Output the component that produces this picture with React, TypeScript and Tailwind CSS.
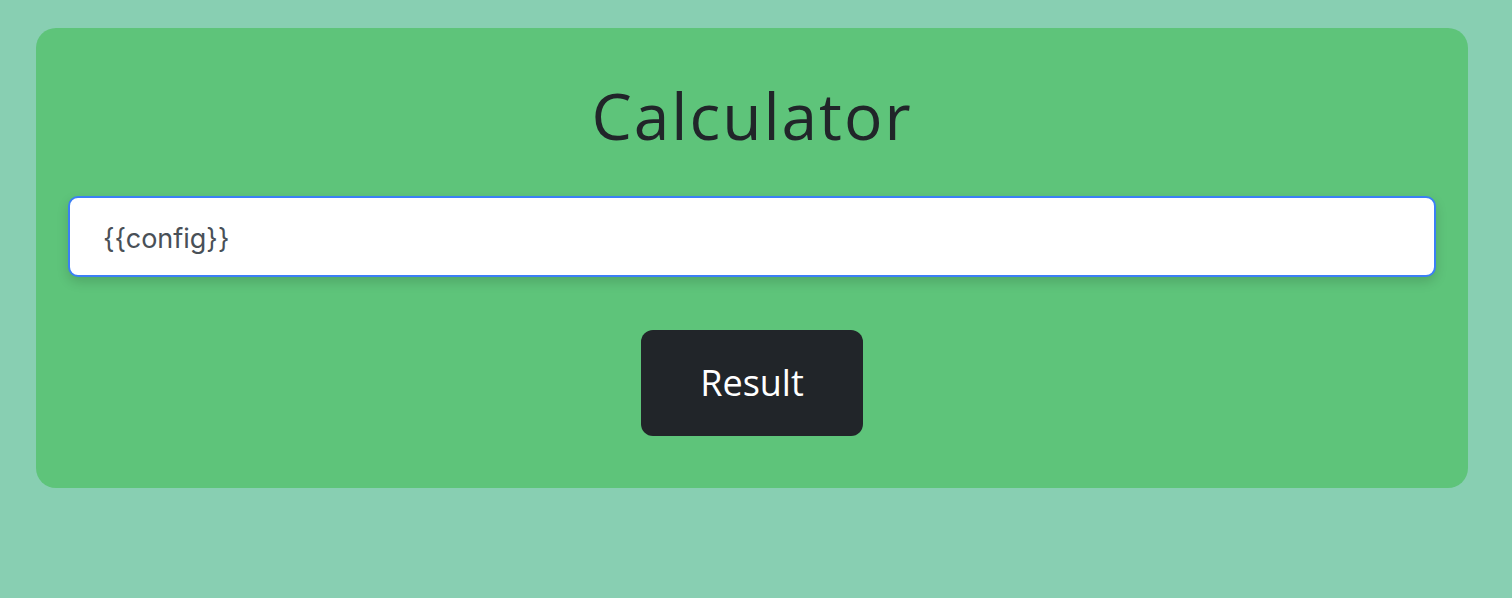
import { useState } from 'react'

export default function App() {
  const [value, setValue] = useState('{{config}}')

  return (
    <div className="min-h-[598px] bg-[#88cfb2] pl-9 pr-11 pt-7">
      <div className="rounded-[20px] bg-[#5ec47a] px-8 pt-[46px] pb-[52px]">
        <h1
          className="text-center text-[64px] leading-[84px] tracking-[2px] text-[#212529]"
          style={{ fontFamily: '"Open Sans", "Noto Sans", sans-serif' }}
        >
          Calculator
        </h1>
        <input
          value={value}
          onChange={(e) => setValue(e.target.value)}
          className="mt-[38px] box-border block h-[81px] w-full rounded-[10px] border-2 border-[#3b7ff5] bg-white px-[33px] pt-1 text-[27px] text-[#495057] shadow-[0_5px_12px_rgba(0,0,0,0.15)] outline-none"
          style={{ fontFamily: 'Inter, "Noto Sans", sans-serif' }}
        />
        <div className="mt-[53px] flex justify-center">
          <button
            className="h-[106px] w-[222px] rounded-xl bg-[#212529] text-[36px] text-white"
            style={{ fontFamily: '"Open Sans", "Noto Sans", sans-serif' }}
          >
            Result
          </button>
        </div>
      </div>
    </div>
  )
}
